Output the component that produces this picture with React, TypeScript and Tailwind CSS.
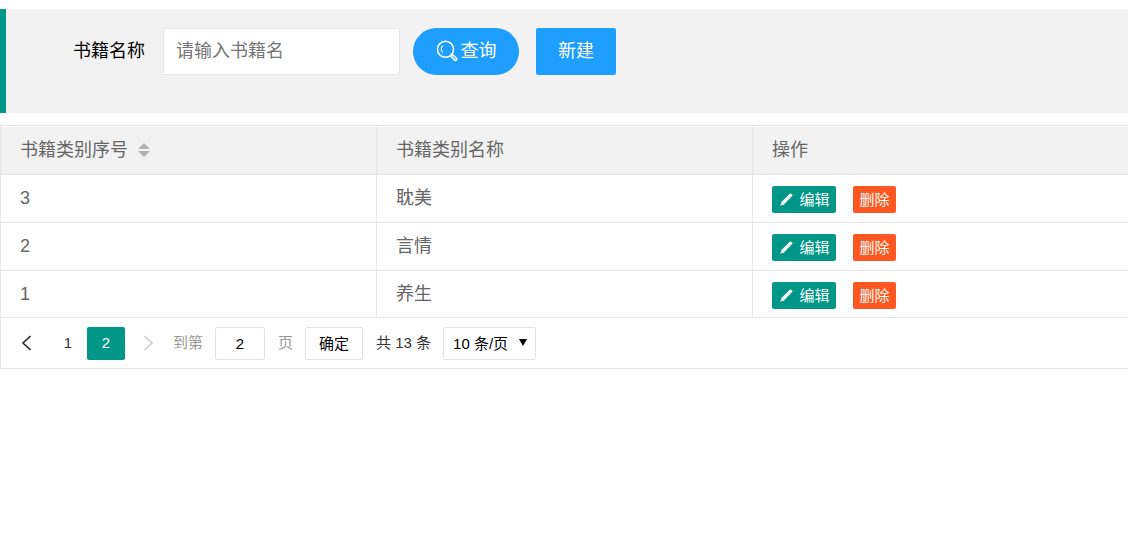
import { useState } from "react";

const rows = [
  { id: 3, name: "耽美" },
  { id: 2, name: "言情" },
  { id: 1, name: "养生" },
];

function SearchIcon() {
  return (
    <svg className="size-[22px]" viewBox="0 0 22 22" fill="none" stroke="currentColor" aria-hidden="true">
      <circle cx="9.5" cy="9.3" r="8" strokeWidth="1.5" />
      <path d="M6.6 12.2C4.6 10.2 4.8 7.4 6.6 6" strokeWidth="1.1" strokeLinecap="round" />
      <path d="M14.6 15.9l1.700-1.700 4.300 4.300c.8.800-.9 2.400-1.700 1.700z" strokeWidth="1.6" strokeLinejoin="round" />
    </svg>
  );
}

function PencilIcon() {
  return (
    <svg className="size-[13px]" viewBox="0 0 13 13" fill="currentColor" aria-hidden="true">
      <path d="M.3 12.700l1.200-3.600L9.600 1c.7-.7 1.500-.7 2.100-.1l.3.300c.6.600.6 1.400-.1 2.100L3.900 11.400z" />
    </svg>
  );
}

function SortIcon() {
  return (
    <svg className="h-[14px] w-3" viewBox="0 0 12 14" fill="#b2b2b2" aria-hidden="true">
      <path d="M0 6L6 0l6 6zM0 8h12l-6 6z" />
    </svg>
  );
}

function Chevron({ next }: { next?: boolean }) {
  return (
    <svg className="h-4 w-[10px]" viewBox="0 0 10 16" fill="none" stroke="currentColor" strokeWidth="1.7" aria-hidden="true">
      <path d={next ? "M1.500 1l7.500 7l-7.500 7" : "M9.500 1L2 8l7.500 7"} />
    </svg>
  );
}

const th = "h-12 border-r border-b border-[#e6e6e6] bg-[#f2f2f2] px-[19px] pb-0.5 text-left font-normal last:border-r-0";
const td = "h-12 border-r border-b border-[#e6e6e6] px-[19px] pb-0.5 last:border-r-0 group-last:h-[47px] group-last:pb-px";

export default function App() {
  const [page, setPage] = useState("2");
  const [size, setSize] = useState("10");

  return (
    <main className="overflow-hidden bg-white pt-[9px] font-['Liberation_Sans','Noto_Sans_CJK_SC',sans-serif] text-[18px] leading-6 text-[#666]">
      <form
        className="flex h-[104px] items-start border-l-[6px] border-[#009688] bg-[#f2f2f2] pt-[19px] pl-[67px]"
        onSubmit={(e) => e.preventDefault()}
      >
        <label htmlFor="book" className="w-[90px] shrink-0 pt-[11px] text-black">
          书籍名称
        </label>
        <input
          id="book"
          type="text"
          placeholder="请输入书籍名"
          className="h-[47px] w-[237px] rounded-xs border border-[#e6e6e6] bg-white px-3 text-black outline-none placeholder:text-[#757575]"
        />
        <button type="submit" className="ml-[13px] flex h-[47px] w-[106px] items-center justify-center gap-[3px] rounded-full bg-[#1e9fff] pb-0.5 text-white">
          <SearchIcon />
          查询
        </button>
        <button type="button" className="ml-[17px] h-[47px] w-20 rounded-xs bg-[#1e9fff] pb-0.5 text-white">
          新建
        </button>
      </form>

      <section className="mt-3 border-t border-b border-l border-[#e6e6e6] pt-px">
        <table className="w-full table-fixed border-separate border-spacing-0">
          <colgroup>
            <col className="w-1/3 min-[1128px]:w-[376px]" />
            <col className="w-1/3 min-[1128px]:w-[376px]" />
            <col />
          </colgroup>
          <thead>
            <tr>
              <th scope="col" className={th}>
                <button type="button" className="flex items-center gap-[10px]">
                  书籍类别序号
                  <SortIcon />
                </button>
              </th>
              <th scope="col" className={th}>书籍类别名称</th>
              <th scope="col" className={th}>操作</th>
            </tr>
          </thead>
          <tbody>
            {rows.map((row) => (
              <tr key={row.id} className="group">
                <td className={td}>{row.id}</td>
                <td className={td}>{row.name}</td>
                <td className={td}>
                  <div className="flex gap-[17px] pt-1 text-[15px] text-white">
                    <button type="button" className="flex h-[27px] w-16 items-center justify-center gap-[6px] rounded-xs bg-[#009688] pl-[2px]">
                      <PencilIcon />
                      编辑
                    </button>
                    <button type="button" className="flex h-[27px] w-[43px] items-center justify-center rounded-xs bg-[#ff5722]">
                      删除
                    </button>
                  </div>
                </td>
              </tr>
            ))}
          </tbody>
        </table>

        <nav aria-label="分页" className="flex h-[50px] items-center pl-[6px] text-[15px] text-[#333]">
          <button type="button" aria-label="上一页" className="flex h-[33px] w-[38px] items-center justify-center">
            <Chevron />
          </button>
          <button type="button" className="ml-1 h-[33px] w-[38px]">1</button>
          <button type="button" aria-current="page" className="h-[33px] w-[38px] rounded-xs bg-[#009688] text-white">2</button>
          <button type="button" aria-label="下一页" disabled className="ml-1 flex h-[33px] w-[38px] items-center justify-center text-[#d2d2d2]">
            <Chevron next />
          </button>
          <label htmlFor="page" className="ml-[6px] text-[#999]">到第</label>
          <input
            id="page"
            type="text"
            value={page}
            onChange={(e) => setPage(e.target.value)}
            className="mr-[13px] ml-3 h-[33px] w-[50px] rounded-xs border border-[#e2e2e2] bg-white text-center text-black outline-none"
          />
          <span className="text-[#999]">页</span>
          <button type="button" className="mr-[13px] ml-3 h-[33px] w-[58px] rounded-xs border border-[#e2e2e2] bg-white pt-0.5 text-black">
            确定
          </button>
          <span>共 13 条</span>
          <div className="relative ml-3">
            <select
              aria-label="每页条数"
              value={size}
              onChange={(e) => setSize(e.target.value)}
              className="h-[33px] w-[93px] appearance-none rounded-xs border border-[#e2e2e2] bg-white pt-0.5 pl-[9px] text-black outline-none"
            >
              <option value="10">10 条/页</option>
              <option value="20">20 条/页</option>
              <option value="30">30 条/页</option>
            </select>
            <svg className="pointer-events-none absolute top-3 right-[9px] h-[7px] w-2" viewBox="0 0 8 7" fill="black" aria-hidden="true">
              <path d="M0 0h8L4 7z" />
            </svg>
          </div>
        </nav>
      </section>
    </main>
  );
}
